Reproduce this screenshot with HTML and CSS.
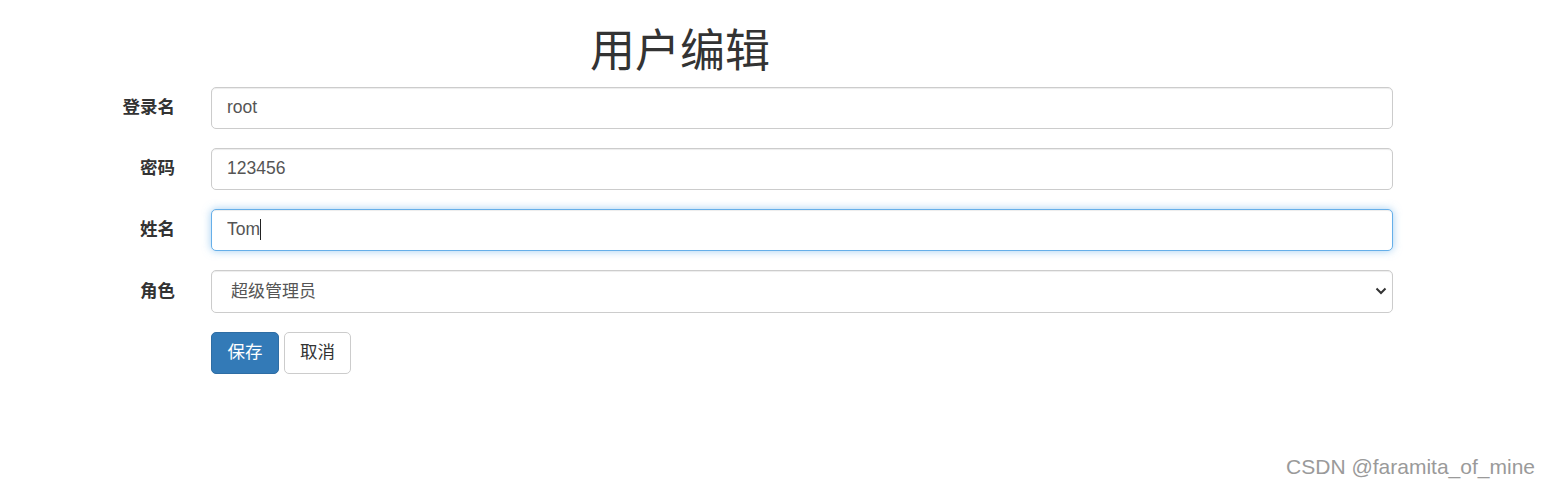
FILE: index.html
```html
<!DOCTYPE html>
<html lang="zh-CN">
<head>
<meta charset="utf-8">
<title>用户编辑</title>
<link rel="stylesheet" href="styles.css">
</head>
<body>
<div class="page">
  <h1 class="title">用户编辑</h1>
  <form class="form">
    <div class="row">
      <label class="label">登录名</label>
      <input class="control" type="text" value="root">
    </div>
    <div class="row">
      <label class="label">密码</label>
      <input class="control" type="text" value="123456">
    </div>
    <div class="row">
      <label class="label">姓名</label>
      <div class="field">
        <input class="control focused" type="text" value="Tom">
        <span class="caret"></span>
      </div>
    </div>
    <div class="row">
      <label class="label">角色</label>
      <div class="field">
        <select class="control select">
          <option>超级管理员</option>
        </select>
        <svg class="chevron" width="12" height="8" viewBox="0 0 12 8"><path d="M1.5 1.5 L6 6 L10.5 1.5" fill="none" stroke="#333" stroke-width="2"/></svg>
      </div>
    </div>
    <div class="row">
      <span></span>
      <div class="buttons">
        <button type="button" class="btn primary">保存</button>
        <button type="button" class="btn default">取消</button>
      </div>
    </div>
  </form>
</div>
<div class="watermark">CSDN @faramita_of_mine</div>
</body>
</html>
```
FILE: styles.css
```css
html, body {
  margin: 0;
  padding: 0;
  background: #fff;
}
body {
  font-family: "Liberation Sans", "Noto Sans CJK SC", sans-serif;
  color: #333;
  width: 1550px;
  height: 488px;
  position: relative;
  overflow: hidden;
}
.page {
  width: 1360px;
}
.title {
  margin: 20px 0 0 0;
  height: 67px;
  font-size: 45px;
  font-weight: 400;
  line-height: 55px;
  text-align: center;
  font-family: "Noto Sans CJK SC", sans-serif;
  color: #333;
}
.form {
  display: flex;
  flex-direction: column;
  gap: 19px;
}
.row {
  display: grid;
  grid-template-columns: 175px 1182px;
  column-gap: 36px;
  align-items: center;
}
.label {
  text-align: right;
  font-weight: bold;
  font-size: 17.5px;
  font-family: "Noto Sans CJK SC", sans-serif;
  color: #333;
  padding-bottom: 5px;
}
.field {
  position: relative;
}
.control {
  box-sizing: border-box;
  width: 1182px;
  height: 42px;
  padding: 0 15px 2px 15px;
  font-size: 17.5px;
  font-family: "Liberation Sans", "Noto Sans CJK SC", sans-serif;
  color: #555;
  background: #fff;
  border: 1px solid #ccc;
  border-radius: 5px;
  box-shadow: inset 0 1px 1px rgba(0,0,0,.075);
  outline: none;
  display: block;
}
.focused {
  border-color: #66afe9;
  box-shadow: inset 0 1px 1px rgba(0,0,0,.075), 0 0 8px rgba(102,175,233,.6);
}
.caret {
  position: absolute;
  left: 49px;
  top: 10px;
  width: 1px;
  height: 21px;
  background: #222;
}
.select {
  -webkit-appearance: none;
  appearance: none;
  padding-left: 19px;
  padding-bottom: 4px;
  font-family: "Noto Sans CJK SC", sans-serif;
  font-size: 17px;
  height: 43px;
}
.chevron {
  position: absolute;
  right: 6px;
  top: 17px;
}
.buttons {
  display: flex;
  gap: 5px;
}
.btn {
  box-sizing: border-box;
  height: 42px;
  padding: 0 15px 5px 15px;
  font-size: 17.5px;
  font-family: "Noto Sans CJK SC", sans-serif;
  border-radius: 5px;
  border: 1px solid #ccc;
  cursor: pointer;
}
.primary {
  background: #337ab7;
  border-color: #2e6da4;
  color: #fff;
  width: 68px;
}
.default {
  background: #fff;
  color: #333;
  width: 67px;
}
.watermark {
  position: absolute;
  right: 15px;
  top: 455px;
  font-size: 21px;
  font-family: "Liberation Sans", sans-serif;
  color: #9a9a9a;
}
```
